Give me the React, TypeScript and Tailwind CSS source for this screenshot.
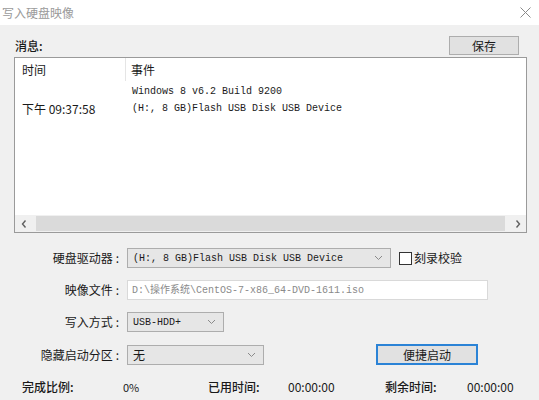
import React from "react";

const ui = { fontFamily: '"Noto Sans CJK SC", "Noto Sans", sans-serif' };
const mono = { fontFamily: '"Liberation Mono", "Noto Sans CJK SC", monospace' };

function Chevron() {
  return (
    <svg width="9" height="6" viewBox="0 0 9 6" className="shrink-0">
      <polyline points="1,1 4.5,4.5 8,1" fill="none" stroke="#8a8a8a" strokeWidth="1" />
    </svg>
  );
}

function Select({ width, text, isMono = true }: { width: string; text: string; isMono?: boolean }) {
  return (
    <div
      className={`${width} h-[20px] flex items-center justify-between pl-[5px] pr-[7px] bg-[#e6e6e6] border border-[#adadad] text-[12px] text-[#1a1a1a]`}
    >
      <span style={isMono ? { ...mono, fontSize: 10 } : ui} className="whitespace-nowrap">{text}</span>
      <Chevron />
    </div>
  );
}

function Label({ text }: { text: string }) {
  return (
    <span className="text-right pr-[3px] whitespace-nowrap">
      {text}
      <span className="ml-[3px]">:</span>
    </span>
  );
}

export default function App() {
  return (
    <div className="w-[539px] h-[400px] bg-[#f0f0f0] overflow-hidden text-[12px] text-[#1a1a1a]" style={ui}>
      {/* Title bar */}
      <div className="h-[25px] bg-white flex items-center justify-between pl-[2px] pr-[8px]">
        <span className="text-[#9a9a9a] text-[12px]">写入硬盘映像</span>
        <svg width="11" height="11" viewBox="0 0 11 11">
          <path d="M0.5 0.5 L10.5 10.5 M10.5 0.5 L0.5 10.5" stroke="#8a8a8a" strokeWidth="1" />
        </svg>
      </div>

      <div className="pl-[14px] pr-[12px]">
        {/* Messages header */}
        <div className="flex items-end justify-between pt-[11px] pr-[8px]">
          <span className="leading-[18px] ml-[1px] font-medium">消息:</span>
          <button className="w-[70px] h-[19px] bg-[#e1e1e1] border border-[#adadad] text-[12px] leading-none">保存</button>
        </div>

        {/* Log list */}
        <div className="mt-[2px] h-[176px] border border-[#9a9a9a] bg-white flex flex-col">
          <div className="h-[23px] flex items-center">
            <div className="w-[111px] h-full flex items-center pl-[7px] border-r border-[#e5e5e5]">时间</div>
            <div className="pl-[5px]">事件</div>
          </div>
          <div className="flex-1 pt-[2px]">
            <div className="h-[17px] flex items-center">
              <div className="w-[112px]" />
              <span style={{ ...mono, fontSize: 10 }} className="pl-[5px]">Windows 8 v6.2 Build 9200</span>
            </div>
            <div className="h-[17px] flex items-center">
              <div className="w-[112px] pl-[7px] whitespace-nowrap">下午 09:37:58</div>
              <span style={{ ...mono, fontSize: 10 }} className="pl-[5px]">(H:, 8 GB)Flash USB Disk USB Device</span>
            </div>
          </div>
          {/* Horizontal scrollbar */}
          <div className="h-[17px] flex items-center bg-[#f0f0f0]">
            <div className="w-[17px] h-full flex items-center justify-center">
              <svg width="6" height="8" viewBox="0 0 6 8">
                <polyline points="4.5,0.5 1.5,4 4.5,7.5" fill="none" stroke="#606060" strokeWidth="1.4" />
              </svg>
            </div>
            <div className="flex-1 h-full flex items-center pl-[4px] pr-[4px]">
              <div className="w-full h-[15px] bg-[#dadada]" />
            </div>
            <div className="w-[17px] h-full flex items-center justify-center">
              <svg width="6" height="8" viewBox="0 0 6 8">
                <polyline points="1.5,0.5 4.5,4 1.5,7.5" fill="none" stroke="#606060" strokeWidth="1.4" />
              </svg>
            </div>
          </div>
        </div>

        {/* Form */}
        <div className="mt-[15px] grid grid-cols-[108px_1fr] gap-x-[5px] gap-y-[12px] items-center">
          <Label text="硬盘驱动器" />
          <div className="flex items-center">
            <Select width="w-[264px]" text="(H:, 8 GB)Flash USB Disk USB Device" />
            <div className="ml-[8px] w-[13px] h-[13px] bg-white border border-[#333]" />
            <span className="ml-[2px]">刻录校验</span>
          </div>

          <Label text="映像文件" />
          <div className="w-[361px] h-[20px] flex items-center pl-[4px] bg-white border border-[#d9d9d9] text-[#8a8a8a] whitespace-nowrap">
            <span style={{ ...mono, fontSize: 10 }}>D:\操作系统\CentOS-7-x86_64-DVD-1611.iso</span>
          </div>

          <Label text="写入方式" />
          <Select width="w-[97px]" text="USB-HDD+" />

          <Label text="隐藏启动分区" />
          <div className="flex items-center">
            <Select width="w-[137px]" text="无" isMono={false} />
            <button className="ml-[112px] w-[102px] h-[21px] bg-[#e1e1e1] border-2 border-[#2b83d6] text-[12px] leading-none">
              便捷启动
            </button>
          </div>
        </div>
      </div>

      {/* Status row */}
      <div className="mt-[12px] pl-[22px] grid grid-cols-[101px_85px_80px_97px_82px_1fr] items-center h-[20px] text-[12px]">
        <span className="font-medium">完成比例:</span>
        <span className="text-[11px]">0%</span>
        <span className="font-medium">已用时间:</span>
        <span>00:00:00</span>
        <span className="font-medium">剩余时间:</span>
        <span>00:00:00</span>
      </div>
    </div>
  );
}
